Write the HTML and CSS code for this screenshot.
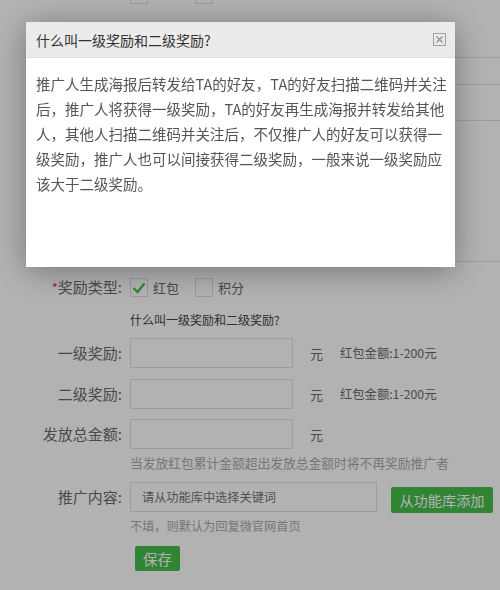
FILE: index.html
```html
<!DOCTYPE html>
<html lang="zh-CN">
<head>
  <meta charset="UTF-8">
  <meta name="viewport" content="width=device-width, initial-scale=1.0">
  <title>推广设置</title>
  <link rel="stylesheet" href="styles.css">
</head>
<body>
  <div class="form">
    <div class="row row-top">
      <div class="label"></div>
      <div class="field">
        <span class="check"></span><span class="check-text"></span>
        <span class="check"></span><span class="check-text"></span>
      </div>
    </div>
    <div class="row row-wide">
      <div class="label"></div>
      <div class="field"><div class="input wide"></div></div>
    </div>
    <div class="row row-area">
      <div class="label"></div>
      <div class="field"><div class="input area"></div></div>
    </div>

    <div class="row row-type">
      <div class="label"><span class="req">*</span>奖励类型:</div>
      <div class="field">
        <span class="check checked">
          <svg width="14" height="12" viewBox="0 0 14 12"><path d="M1.5 6 L5.5 10 L12.5 1.5" fill="none" stroke="#4cbb50" stroke-width="2.2"/></svg>
        </span><span class="check-text">红包</span>
        <span class="check"></span><span class="check-text">积分</span>
      </div>
    </div>
    <div class="row row-link">
      <div class="label"></div>
      <div class="field"><a class="qa">什么叫一级奖励和二级奖励?</a></div>
    </div>
    <div class="row row-first">
      <div class="label">一级奖励:</div>
      <div class="field">
        <div class="input small"></div>
        <span class="unit">元</span>
        <span class="range">红包金额:1-200元</span>
      </div>
    </div>
    <div class="row row-second">
      <div class="label">二级奖励:</div>
      <div class="field">
        <div class="input small"></div>
        <span class="unit">元</span>
        <span class="range">红包金额:1-200元</span>
      </div>
    </div>
    <div class="row row-total">
      <div class="label">发放总金额:</div>
      <div class="field">
        <div class="input small"></div>
        <span class="unit">元</span>
      </div>
    </div>
    <div class="row row-hint1">
      <div class="label"></div>
      <div class="field"><span class="hint hint-long">当发放红包累计金额超出发放总金额时将不再奖励推广者</span></div>
    </div>
    <div class="row row-content">
      <div class="label">推广内容:</div>
      <div class="field bottom">
        <div class="input keyword">请从功能库中选择关键词</div>
        <button class="btn btn-add">从功能库添加</button>
      </div>
    </div>
    <div class="row row-hint2">
      <div class="label"></div>
      <div class="field"><span class="hint hint-short">不填，则默认为回复微官网首页</span></div>
    </div>
    <div class="row row-save">
      <div class="label"></div>
      <div class="field"><button class="btn btn-save">保存</button></div>
    </div>
  </div>

  <div class="mask"></div>

  <div class="dialog">
    <div class="dialog-head">
      <span class="dialog-title">什么叫一级奖励和二级奖励?</span>
      <span class="dialog-close">
        <svg width="13" height="13" viewBox="0 0 13 13"><rect x="0.5" y="0.5" width="12" height="12" fill="none" stroke="#a0a0a0"/><path d="M3.5 3.5 L9.5 9.5 M9.5 3.5 L3.5 9.5" stroke="#888" stroke-width="1.1"/></svg>
      </span>
    </div>
    <div class="dialog-body">推广人生成海报后转发给TA的好友，TA的好友扫描二维码并关注后，推广人将获得一级奖励，TA的好友再生成海报并转发给其他人，其他人扫描二维码并关注后，不仅推广人的好友可以获得一级奖励，推广人也可以间接获得二级奖励，一般来说一级奖励应该大于二级奖励。</div>
  </div>
</body>
</html>
```

FILE: styles.css
```css
html, body {
  margin: 0;
  padding: 0;
  height: 100%;
  overflow: hidden;
}
body {
  background: #fff;
  font-family: "Noto Sans CJK SC", "Noto Sans", sans-serif;
  color: #6a6a6a;
}
.form {
  margin-top: -15px;
  display: flex;
  flex-direction: column;
}
.row {
  display: grid;
  grid-template-columns: 122px 1fr;
  column-gap: 8px;
  align-items: center;
}
.label {
  text-align: right;
  font-size: 15px;
  line-height: 20px;
  white-space: nowrap;
}
.req {
  color: #e23b3b;
  font-size: 13px;
}
.field {
  display: flex;
  align-items: center;
  min-width: 0;
}
.field.bottom {
  align-items: flex-end;
}

/* rows, top to bottom */
.row-top { height: 18px; }
.row-wide { margin-top: 54px; }
.row-area { margin-top: 35px; }
.row-type { margin-top: 15px; height: 19px; }
.row-link { margin-top: 14px; }
.row-first { margin-top: 8px; }
.row-second { margin-top: 11px; }
.row-total { margin-top: 10px; }
.row-hint1 { margin-top: 4px; }
.row-content { margin-top: 9px; }
.row-hint2 { margin-top: 4px; }
.row-save { margin-top: 10px; }

.check {
  box-sizing: border-box;
  width: 18px;
  height: 19px;
  border: 1px solid #dcdcdc;
  background: #fff;
  display: inline-flex;
  align-items: center;
  justify-content: center;
}
.check-text {
  font-size: 13px;
  line-height: 19px;
  margin-left: 5px;
  width: 42px;
}
.qa {
  font-size: 12px;
  line-height: 20px;
  color: #444;
}
.input {
  box-sizing: border-box;
  border: 1px solid #e2e2e2;
  background: #fff;
  height: 30px;
}
.input.wide {
  flex: 1;
  height: 28px;
  border-right: none;
}
.input.area {
  flex: 1;
  height: 142px;
  border-right: none;
}
.input.small {
  width: 163px;
}
.input.keyword {
  width: 247px;
  padding-left: 11px;
  font-size: 12.2px;
  line-height: 28px;
  color: #747474;
}
.unit {
  font-size: 13px;
  margin-left: 17px;
}
.range {
  font-size: 12.3px;
  margin-left: 17px;
}
.hint {
  color: #aaa;
  line-height: 20px;
}
.hint-long { font-size: 12.75px; }
.hint-short { font-size: 12.2px; }
.btn {
  border: none;
  border-radius: 2px;
  background: #46bd4b;
  color: #fff;
  font-family: inherit;
  cursor: pointer;
  padding: 0;
}
.btn-add {
  margin-left: 14px;
  width: 102px;
  height: 26px;
  font-size: 14.2px;
  margin-bottom: -1px;
}
.btn-save {
  margin-left: 5px;
  width: 45px;
  height: 25px;
  font-size: 14.5px;
}

.mask {
  position: fixed;
  inset: 0;
  background: rgba(0, 0, 0, 0.3);
}
.dialog {
  position: fixed;
  left: 26px;
  top: 22px;
  width: 429px;
  height: 245px;
  background: #fff;
  box-shadow: 0 4px 30px rgba(0, 0, 0, 0.35);
  display: flex;
  flex-direction: column;
}
.dialog-head {
  height: 35px;
  background: #ebebeb;
  border-bottom: 1px solid #dedede;
  display: flex;
  align-items: center;
  justify-content: space-between;
  padding: 0 10px;
}
.dialog-title {
  font-size: 14px;
  color: #333;
}
.dialog-close {
  display: flex;
  margin-right: -1px;
}
.dialog-body {
  padding: 13px 0 0 10px;
  width: 412px;
  font-size: 14.5px;
  line-height: 25px;
  color: #555;
}
```
